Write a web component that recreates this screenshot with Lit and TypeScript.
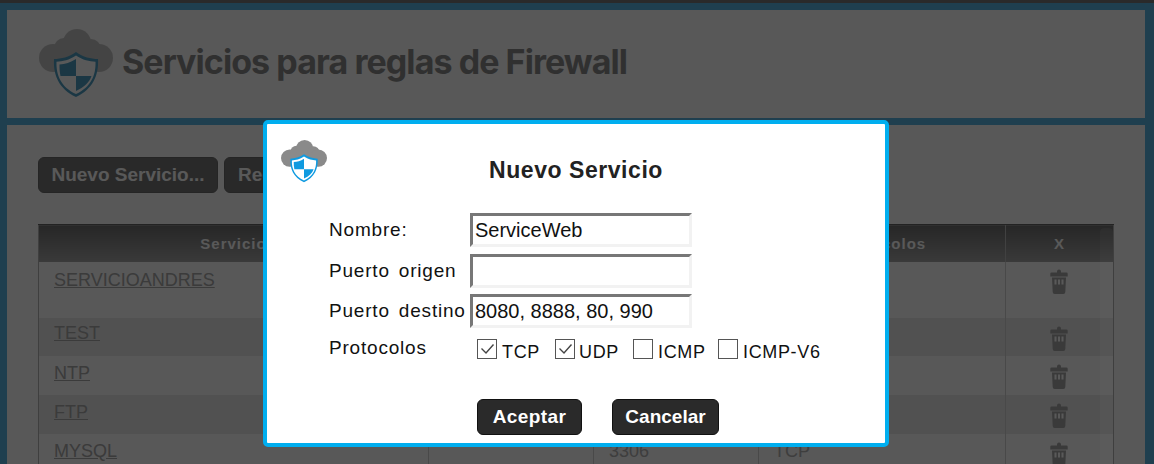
import { LitElement, html, css, svg } from "lit";
import { customElement } from "lit/decorators.js";

const logo = (cloud: string, blue: string) => html`<svg viewBox="0 0 74 69" class="logo">
  <g fill="${cloud}">
    <circle cx="14" cy="29" r="14"/><circle cx="25" cy="19" r="10"/><circle cx="38" cy="14" r="14"/>
    <circle cx="52" cy="20" r="10"/><circle cx="60" cy="29" r="14"/><rect x="14" y="20" width="46" height="22"/>
  </g>
  <path d="M37 23 C44 28 52 30 59 30 C60 46 54 60 37 68 C20 60 14 46 15 30 C22 30 30 28 37 23Z" fill="${blue}"/>
  <path d="M37 26.5 C43.5 31 50.5 32.5 56.5 32.7 C57 46 52 58 37 65 C22 58 17 46 17.5 32.7 C23.5 32.5 30.5 31 37 26.5Z" fill="#fff"/>
  <path d="M37 30 V47 H21.5 C20.6 43 20.4 39 20.5 35.5 C26 35 31.5 33.5 37 30Z M37 47 H52.5 C50.5 53 45 58.5 37 62Z" fill="${blue}"/>
</svg>`;

const trash = svg`<svg class="trash" viewBox="0 0 18 25">
  <path d="M7 2.5 a2 2 0 0 1 4 0 V3.5 H16.5 a1.2 1.2 0 0 1 1.2 1.2 V7.5 H.3 V4.7 a1.2 1.2 0 0 1 1.2-1.2 H7Z M2 8.5 H16 L15.3 23 a2 2 0 0 1-2 2 H4.7 a2 2 0 0 1-2-2Z" fill="#a6a6a6"/>
  <path d="M4.5 10.5h2v5h-2z M8 10.5h2v5h-2z M11.5 10.5h2v5h-2z" fill="#fff"/>
</svg>`;

const rows = [
  { name: "SERVICIOANDRES", dest: "", proto: "", cls: "tall" },
  { name: "TEST", dest: "", proto: "", cls: "alt short" },
  { name: "NTP", dest: "", proto: "", cls: "" },
  { name: "FTP", dest: "", proto: "", cls: "alt" },
  { name: "MYSQL", dest: "3306", proto: "TCP", cls: "" },
];

const check = html`<svg viewBox="0 0 20 20" class="mark"><path d="M4.5 9.5 L9 14 L16.5 5.5" fill="none" stroke="#444" stroke-width="1.4"/></svg>`;

@customElement("app-root")
export class AppRoot extends LitElement {
  static styles = css`
    :host { display: block; position: relative; height: 464px; overflow: hidden; font-family: "Liberation Sans", Arial, sans-serif; }
    .page { height: 464px; box-sizing: border-box; background: #5ab4e2; border-top: 3px solid #7a7a7a; padding: 7px 9px 0 7px; display: flex; flex-direction: column; gap: 7px; overflow: hidden; }
    .panel { background: #fbfbfb; }
    .head { height: 108px; flex: none; display: flex; align-items: center; box-sizing: border-box; padding: 0 0 0 32px; gap: 9px; }
    .head .logo { width: 74px; height: 69px; margin-top: -2px; }
    h1 { margin: -6px 0 0; font: 700 34px "Inter", sans-serif; letter-spacing: -.93px; color: #8a8a8a; white-space: nowrap; }
    .body { flex: 1; padding: 32px 32px 0 31px; }
    .actions { display: flex; gap: 6px; margin-bottom: 31px; }
    button { font: 700 19px "Liberation Sans", sans-serif; background: #2a2a2a; color: #fff; border: 1px solid #111; border-radius: 6px; height: 36px; padding: 0; cursor: pointer; }
    .actions .a1 { width: 180px; }
    .actions .a2 { width: 120px; text-align: left; padding-left: 13px; }
    .actions button { background: #767676; border-color: #6a6a6a; color: #fff; }
    table { border-collapse: collapse; width: 1075px; table-layout: fixed; border-left: 1px solid #b5b5b5; border-right: 1px solid #b5b5b5; }
    th { height: 37px; padding: 0; background: linear-gradient(#6f6f6f, #a6a6a6); color: #fff; font: 700 15px "Liberation Sans", sans-serif; letter-spacing: 1px; border-left: 1px solid #bbb; border-top: 1px solid #666; }
    th:first-child, td:first-child { border-left: none; }
    td { height: 39px; padding: 7px 0 0 15px; font-size: 18px; color: #b2b2b2; border-left: 1px solid #d0d0d0; vertical-align: top; box-sizing: border-box; }
    tr.alt td { background: #e8e8e8; }
    tr.tall td { height: 56px; padding-top: 8px; }
    tr.short td { height: 38px; padding-top: 5px; }
    td a { color: #a8a8a8; text-decoration: underline; }
    td.x, tr.short td.x { padding: 8px 2px 0 0; text-align: center; }
    tr.tall td.x { padding: 7px 2px 0 0; text-align: center; }
    .trash { width: 18px; height: 25px; display: inline-block; }
    .scrim { position: absolute; inset: 0; background: rgba(0,0,0,.65); }
    .track { position: absolute; left: 1100px; top: 228px; bottom: 0; width: 13px; border-radius: 4px 4px 0 0; background: rgba(255,255,255,.025); }
    .modal { position: absolute; left: 263px; top: 120px; width: 626px; height: 327px; box-sizing: border-box; background: #fff; border: 4px solid #00aeef; border-radius: 5px; padding: 16px 0 0 14px; }
    .mhead { display: grid; grid-template-columns: 46px 1fr 46px; height: 73px; padding-right: 14px; color: #222; }
    .mhead .logo { width: 46px; height: 43px; }
    h2 { margin: 16px 0 0; text-align: center; font: 700 23px "Liberation Sans", sans-serif; letter-spacing: .55px; color: #222; line-height: 28px; }
    .form { padding-left: 48px; display: grid; grid-template-columns: 141px 222px; row-gap: 6.5px; align-items: center; }
    label { font-size: 19px; color: #111; letter-spacing: .8px; word-spacing: 3px; white-space: nowrap; }
    input { box-sizing: border-box; width: 222px; height: 34px; border-style: solid; border-width: 3px; border-color: #777 #f2f2f2 #f2f2f2 #777; font: 20px "Liberation Sans", sans-serif; color: #111; padding: 0 0 0 2px; outline: none; background: #fff; }
    .protos { grid-column: 1 / 3; display: grid; grid-template-columns: 141px auto; margin-top: 4.5px; width: 520px; }
    .protos > label { margin-top: -2px; }
    .checks { display: flex; padding-left: 7px; }
    .chk { display: flex; align-items: flex-start; font-size: 18px; color: #111; letter-spacing: .65px; white-space: nowrap; }
    .c1 { width: 78px; }
    .c2 { width: 78px; }
    .c3 { width: 85px; }
    .box { width: 20px; height: 20px; box-sizing: border-box; border: 1px solid #555; background: #fff; margin-right: 5px; flex: none; position: relative; }
    .c2 .box { margin-right: 4px; }
    .chk span.t { padding-top: 3px; line-height: 21px; }
    .mark { position: absolute; left: -1px; top: -1px; width: 20px; height: 20px; }
    .btns { display: flex; gap: 30px; padding-left: 196px; margin-top: 36px; }
    .btns .ok { width: 105px; letter-spacing: .4px; }
    .btns .no { width: 107px; }
  `;

  render() {
    return html`
      <div class="page">
        <header class="panel head">
          ${logo("#c4c4c4", "#4f9fc4")}
          <h1>Servicios para reglas de Firewall</h1>
        </header>
        <main class="panel body">
          <div class="actions">
            <button class="a1">Nuevo Servicio...</button>
            <button class="a2">Recargar</button>
          </div>
          <table>
            <colgroup><col style="width:390px"/><col style="width:165px"/><col style="width:165px"/><col style="width:247px"/><col style="width:108px"/></colgroup>
            <thead><tr><th>Servicio</th><th>Puerto origen</th><th>Puerto destino</th><th>Protocolos</th><th>X</th></tr></thead>
            <tbody>
              ${rows.map((r) => html`<tr class="${r.cls}">
                <td><a href="#">${r.name}</a></td><td></td><td>${r.dest}</td><td>${r.proto}</td><td class="x">${trash}</td>
              </tr>`)}
            </tbody>
          </table>
        </main>
      </div>
      <div class="scrim"></div>
      <div class="track"></div>
      <section class="modal">
        <div class="mhead">${logo("#8a8a8a", "#0f9ae0")}<h2>Nuevo Servicio</h2></div>
        <div class="form">
          <label>Nombre:</label><input value="ServiceWeb"/>
          <label>Puerto origen</label><input value=""/>
          <label>Puerto destino</label><input value="8080, 8888, 80, 990"/>
          <div class="protos">
            <label>Protocolos</label>
            <div class="checks">
              <div class="chk c1"><div class="box">${check}</div><span class="t">TCP</span></div>
              <div class="chk c2"><div class="box">${check}</div><span class="t">UDP</span></div>
              <div class="chk c3"><div class="box"></div><span class="t">ICMP</span></div>
              <div class="chk"><div class="box"></div><span class="t">ICMP-V6</span></div>
            </div>
          </div>
        </div>
        <div class="btns"><button class="ok">Aceptar</button><button class="no">Cancelar</button></div>
      </section>
    `;
  }
}
